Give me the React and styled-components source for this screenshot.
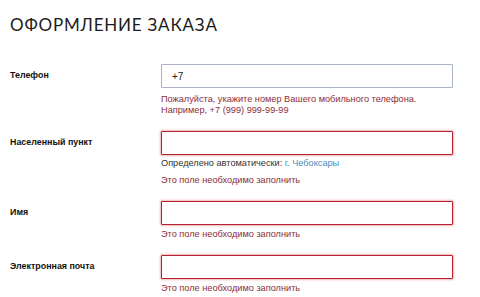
import React from "react";
import styled, { createGlobalStyle } from "styled-components";

const GlobalStyle = createGlobalStyle`
  html, body {
    margin: 0;
    padding: 0;
    background: #ffffff;
  }
  body {
    font-family: "Liberation Sans", Arial, sans-serif;
    -webkit-font-smoothing: antialiased;
  }
`;

const Page = styled.div`
  width: 480px;
  height: 297px;
  overflow: hidden;
  padding: 0 27px 0 10px;
  box-sizing: border-box;
`;

const Title = styled.h1`
  margin: 0;
  padding-top: 16px;
  font-family: "Lato", "Open Sans", sans-serif;
  font-weight: 400;
  font-size: 17px;
  line-height: 18px;
  letter-spacing: 0.8px;
  color: #1c1c1c;
`;

const Form = styled.form`
  display: flex;
  flex-direction: column;
  gap: 15px;
  margin-top: 30px;
`;

const Row = styled.div`
  display: grid;
  grid-template-columns: 151px 1fr;
  align-items: start;
`;

const Label = styled.label`
  font-size: 8.9px;
  font-weight: 700;
  line-height: 11px;
  color: #111;
  padding-top: 6px;
`;

const Field = styled.div`
  display: flex;
  flex-direction: column;
`;

const Input = styled.input`
  box-sizing: border-box;
  width: 100%;
  height: 24px;
  padding: 0 10px;
  font-family: "Liberation Sans", Arial, sans-serif;
  font-size: 10px;
  color: #222;
  background: #fff;
  outline: none;
  border: 1.5px solid ${(p) => (p.$invalid ? "#b3222f" : "#aab4c4")};
  border-radius: 1px;
  box-shadow: ${(p) =>
    p.$invalid ? "0 0 2px 1px rgba(220, 90, 100, 0.45)" : "none"};
`;

const Hint = styled.div`
  font-size: 9.2px;
  line-height: 11px;
  margin-top: ${(p) => p.$gap || 6}px;
  color: ${(p) => (p.$error ? "#8e2d38" : "#333")};
`;

const CityLink = styled.a`
  color: #4b8cc4;
  text-decoration: none;
`;

export default function App() {
  return (
    <Page>
      <GlobalStyle />
      <Title>ОФОРМЛЕНИЕ ЗАКАЗА</Title>
      <Form>
        <Row>
          <Label>Телефон</Label>
          <Field>
            <Input defaultValue="+7" />
            <Hint $error>
              Пожалуйста, укажите номер Вашего мобильного телефона.
              <br />
              Например, +7 (999) 999-99-99
            </Hint>
          </Field>
        </Row>
        <Row>
          <Label>Населенный пункт</Label>
          <Field>
            <Input $invalid />
            <Hint $gap={3}>
              Определено автоматически: <CityLink href="#">г. Чебоксары</CityLink>
            </Hint>
            <Hint $error>Это поле необходимо заполнить</Hint>
          </Field>
        </Row>
        <Row>
          <Label>Имя</Label>
          <Field>
            <Input $invalid />
            <Hint $error $gap={4}>Это поле необходимо заполнить</Hint>
          </Field>
        </Row>
        <Row>
          <Label>Электронная почта</Label>
          <Field>
            <Input $invalid />
            <Hint $error $gap={4}>Это поле необходимо заполнить</Hint>
          </Field>
        </Row>
      </Form>
    </Page>
  );
}
